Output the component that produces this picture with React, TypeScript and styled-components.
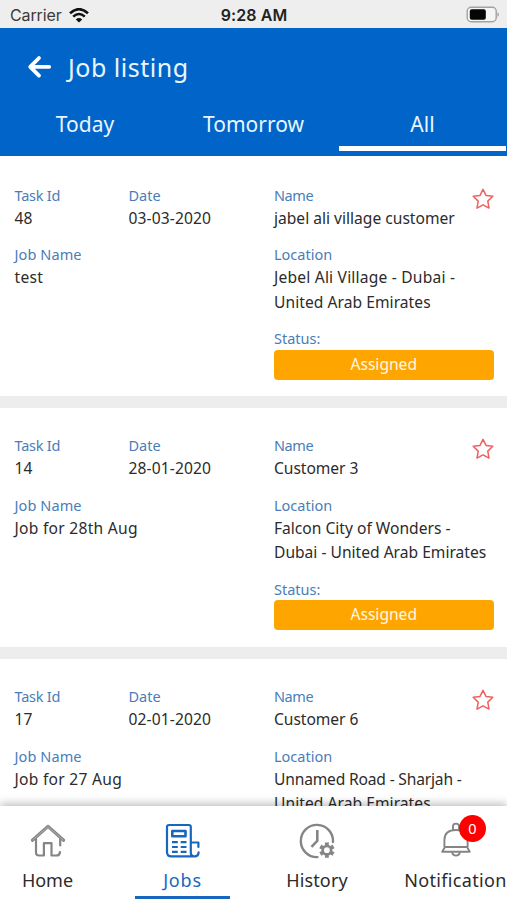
import React from "react";
import styled, { createGlobalStyle } from "styled-components";

const GlobalStyle = createGlobalStyle`
  * { box-sizing: border-box; }
  body { margin: 0; background: #fff; font-family: "Noto Sans", "Open Sans", sans-serif; }
`;

const Screen = styled.div`
  display: flex;
  flex-direction: column;
  width: 507px;
  height: 900px;
  overflow: hidden;
  background: #fff;
`;

const StatusBar = styled.div`
  display: grid;
  grid-template-columns: 1fr auto 1fr;
  align-items: center;
  height: 28px;
  flex: none;
  padding: 2px 8px 0 10px;
  background: #eeeeee;
  color: #3a3a3a;
  font: 400 16px/26px Inter, sans-serif;
`;

const Carrier = styled.div`
  display: flex;
  align-items: center;
  gap: 7px;
  letter-spacing: -0.12px;
`;

const Clock = styled.div`
  color: #222;
  font-weight: 600;
  letter-spacing: 0.1px;
  margin-right: 1px;
`;

const Battery = styled.div`
  justify-self: end;
  display: flex;
  margin-bottom: 2px;
`;

const Header = styled.header`
  flex: none;
  height: 128px;
  background: #0064c8;
  color: #e9f6ff;
`;

const TitleRow = styled.div`
  display: flex;
  align-items: center;
  height: 78px;
  padding-left: 27px;
  gap: 16px;
`;

const Title = styled.h1`
  margin: 0;
  font-size: 25px;
  font-weight: 400;
  line-height: 36px;
  letter-spacing: 0.5px;
`;

const Tabs = styled.div`
  display: grid;
  grid-template-columns: 170px 167px 170px;
`;

const Tab = styled.div<{ $active?: boolean }>`
  height: 44.5px;
  padding-top: 3px;
  margin: ${(p) => (p.$active ? "0 1px 0 2px" : "0")};
  border-bottom: 5.5px solid ${(p) => (p.$active ? "#fff" : "transparent")};
  text-align: center;
  font-size: 21px;
  line-height: 30px;
`;

const List = styled.main`
  flex: 1;
  min-height: 0;
  overflow: hidden;
  padding-top: 1.3px;
`;

const Card = styled.article`
  display: grid;
  grid-template-columns: 114px 145.5px 1fr;
  height: 250.7px;
  padding: 27.5px 13.5px 0 14.5px;
  border-bottom: 12px solid #ededed;
`;

const Column = styled.div`
  display: flex;
  flex-direction: column;
  gap: 14.3px;
`;

const LeftArea = styled.div`
  grid-column: 1 / 3;
  display: grid;
  grid-template-columns: 114px 1fr;
  align-content: start;
  row-gap: 14.3px;
`;

const Field = styled.div<{ $span?: boolean }>`
  grid-column: ${(p) => (p.$span ? "1 / -1" : "auto")};
`;

const Label = styled.div<{ $track?: number }>`
  margin-bottom: 1px;
  color: #4a7db8;
  font-size: 14.5px;
  line-height: 20px;
  letter-spacing: ${(p) => p.$track ?? 0}px;
  white-space: nowrap;
`;

const Value = styled.div<{ $track?: number }>`
  color: #2b2b2b;
  font-size: 15.6px;
  line-height: 24.2px;
  letter-spacing: ${(p) => p.$track ?? 0}px;
  white-space: nowrap;
`;

const NameRow = styled.div`
  display: flex;
  justify-content: space-between;
  align-items: flex-start;
`;

const StarBox = styled.div`
  display: flex;
  padding-top: 3px;
`;

const Badge = styled.div`
  height: 30px;
  margin-top: 1.6px;
  border-radius: 4px;
  background: #ffa500;
  color: #fff8e8;
  text-align: center;
  font-size: 15.6px;
  line-height: 29.4px;
`;

const BottomNav = styled.nav`
  position: relative;
  flex: none;
  display: grid;
  grid-template-columns: 95px 175px 94px 143px;
  height: 94px;
  background: #fff;
  box-shadow: 0 -2px 9px rgba(0, 0, 0, 0.28);
`;

const NavItem = styled.div<{ $active?: boolean; $end?: boolean; $track?: number }>`
  display: flex;
  flex-direction: column;
  align-items: center;
  justify-self: ${(p) => (p.$end ? "end" : "center")};
  width: ${(p) => (p.$end ? 103 : 95)}px;
  padding-top: 16px;
  color: ${(p) => (p.$active ? "#1767bf" : "#2b2b2b")};
  height: 93px;
  border-bottom: 3px solid ${(p) => (p.$active ? "#1767bf" : "transparent")};
  font-size: 18px;
  line-height: 26px;
  letter-spacing: ${(p) => p.$track ?? 0}px;
  white-space: nowrap;
`;

const NavIcon = styled.div`
  position: relative;
  display: flex;
  height: 38px;
  margin-bottom: 7px;
  color: #858585;
`;

const Count = styled.span`
  position: absolute;
  left: 19.5px;
  top: -7px;
  width: 27px;
  height: 27px;
  border-radius: 50%;
  background: #ff0000;
  color: #fff;
  text-align: center;
  font-size: 14.5px;
  line-height: 26px;
  letter-spacing: 0;
`;

const Wifi = () => (
  <svg width="20" height="15" viewBox="0 0 20 15" fill="none" stroke="#111" strokeWidth="2.6">
    <path d="M1 5.2Q10-2.8 19 5.2M4.2 8.6q5.8-5.2 11.6 0" />
    <path d="M10 14.5 6.8 11.4q3.2-2.7 6.4 0Z" fill="#111" stroke="none" />
  </svg>
);

const BatteryIcon = () => (
  <svg width="33" height="17" viewBox="0 0 33 17">
    <rect x="1.2" y="1.2" width="29" height="14.6" rx="4" fill="#f5f5f5" stroke="#a2a2a2" strokeWidth="1.4" />
    <rect x="3.8" y="3.3" width="16" height="10.4" rx="2" fill="#050505" />
    <path d="M31.4 6.3q1.6.7 1.6 2.2t-1.6 2.2Z" fill="#a2a2a2" />
  </svg>
);

const BackArrow = () => (
  <svg width="25" height="24" viewBox="0 0 25 24" fill="none" stroke="#fff" strokeWidth="3.8" strokeLinecap="round" strokeLinejoin="round">
    <path d="M12 3 3.2 11.8l8.8 8.8M4 11.8H22.2" />
  </svg>
);

const Star = () => (
  <svg width="22" height="22" viewBox="0 0 22 22" fill="none" stroke="#f0605f" strokeWidth="1.5" strokeLinejoin="round">
    <path d="m11 1.3 3 6.1 6.8.9-5 4.8 1.2 7L11 16.8 5 20.1l1.2-7-5-4.8 6.8-.9Z" />
  </svg>
);

const HomeIcon = () => (
  <svg width="36" height="38" viewBox="0 0 36 38" fill="none" stroke="currentColor" strokeWidth="2.2" strokeLinecap="round" strokeLinejoin="round">
    <path d="M6 17v13.5q0 3 3 3h4.9V21.2h7.6v12.3h5q3.2 0 3.5-3.4M30.2 23.5V17" />
    <path d="M2.4 18.2 18 4.4l15.6 13.8" strokeWidth="3.2" />
    <path d="M2.8 17.9 18 4.7l15.2 13.2" stroke="#b9b9b9" strokeWidth=".8" />
  </svg>
);

const JobsIcon = () => (
  <svg width="36" height="38" viewBox="0 0 36 38" fill="none" stroke="#1767bf" strokeWidth="2.2" strokeLinejoin="round">
    <path d="M25.8 30.5V5q0-2-2-2H4q-2 0-2 2v25q0 4.4 4.4 4.4h23.2q3.8 0 4-4M25.8 30.5q0 3.9 3.6 3.9M26 20.5h7.4V25" strokeLinecap="round" />
    <rect x="7.3" y="9" width="13.2" height="5.2" strokeWidth="2.6" />
    <path d="M7 20.1h5.8M15.7 20.1h5.8M7 25h5.8M15.7 25h5.8M7 29.9h5.8M15.7 29.9h5.8" />
  </svg>
);

const gearCorners = [
  [-19, 5.6],
  [-15, 7.9],
  [15, 7.9],
  [19, 5.6],
];
const gearPath = Array.from({ length: 6 }, (_, tooth) =>
  gearCorners.map(([offset, radius]) => {
    const angle = ((tooth * 60 + offset) * Math.PI) / 180;
    return `${27.9 + radius * Math.sin(angle)},${28.2 - radius * Math.cos(angle)}`;
  }).join(" "),
).join(" ");

const HistoryIcon = () => (
  <svg width="36" height="38" viewBox="0 0 36 38" fill="none" stroke="currentColor" strokeWidth="2.4">
    <path d="M18.4 35.1A16.1 16.1 0 1 1 34 20" strokeLinecap="round" />
    <path d="M18.3 8v10.8l-5.8 6" strokeWidth="2.6" />
    <polygon points={gearPath} fill="currentColor" stroke="none" />
    <circle cx="27.9" cy="28.2" r="2.9" fill="#fff" stroke="none" />
  </svg>
);

const BellIcon = () => (
  <svg width="32" height="38" viewBox="0 0 32 38" fill="none" stroke="currentColor" strokeWidth="1.9" strokeLinejoin="round">
    <path d="M13 8V4.2q0-2.6 3-2.6t3 2.6V8M4.4 25v-7Q4.4 8 16 8t11.6 10v7" />
    <path d="M5 25h22l2.8 4.8H2.2Z" />
    <path d="M12 30.3q.8 3.3 4 3.3t4-3.3" />
  </svg>
);

type Line = { text: string; track?: number };
type Job = { id: string; date: string; job: Line; name: Line; location: Line[] };

const jobs: Job[] = [
  {
    id: "48",
    date: "03-03-2020",
    job: { text: "test", track: 0.25 },
    name: { text: "jabel ali village customer", track: 0 },
    location: [
      { text: "Jebel Ali Village - Dubai -", track: 0.2 },
      { text: "United Arab Emirates", track: 0.05 },
    ],
  },
  {
    id: "14",
    date: "28-01-2020",
    job: { text: "Job for 28th Aug", track: 0.27 },
    name: { text: "Customer 3", track: -0.05 },
    location: [
      { text: "Falcon City of Wonders -", track: 0 },
      { text: "Dubai - United Arab Emirates", track: 0 },
    ],
  },
  {
    id: "17",
    date: "02-01-2020",
    job: { text: "Job for 27 Aug", track: 0.27 },
    name: { text: "Customer 6", track: -0.05 },
    location: [
      { text: "Unnamed Road - Sharjah -", track: -0.18 },
      { text: "United Arab Emirates", track: 0.05 },
    ],
  },
];

const JobCard = ({ job }: { job: Job }) => (
  <Card>
    <LeftArea>
      <Field>
        <Label $track={-0.25}>Task Id</Label>
        <Value $track={0.2}>{job.id}</Value>
      </Field>
      <Field>
        <Label>Date</Label>
        <Value $track={0.12}>{job.date}</Value>
      </Field>
      <Field $span>
        <Label $track={0.1}>Job Name</Label>
        <Value $track={job.job.track}>{job.job.text}</Value>
      </Field>
    </LeftArea>
    <Column>
      <NameRow>
        <Field>
          <Label $track={-0.4}>Name</Label>
          <Value $track={job.name.track}>{job.name.text}</Value>
        </Field>
        <StarBox>
          <Star />
        </StarBox>
      </NameRow>
      <Field>
        <Label>Location</Label>
        {job.location.map((line) => (
          <Value key={line.text} $track={line.track}>
            {line.text}
          </Value>
        ))}
      </Field>
      <Field>
        <Label>Status:</Label>
        <Badge>Assigned</Badge>
      </Field>
    </Column>
  </Card>
);

export default function App() {
  return (
    <Screen>
      <GlobalStyle />
      <StatusBar>
        <Carrier>
          Carrier <Wifi />
        </Carrier>
        <Clock>9:28 AM</Clock>
        <Battery>
          <BatteryIcon />
        </Battery>
      </StatusBar>
      <Header>
        <TitleRow>
          <BackArrow />
          <Title>Job listing</Title>
        </TitleRow>
        <Tabs>
          <Tab>Today</Tab>
          <Tab>Tomorrow</Tab>
          <Tab $active>All</Tab>
        </Tabs>
      </Header>
      <List>
        {jobs.map((job) => (
          <JobCard key={job.id} job={job} />
        ))}
      </List>
      <BottomNav>
        <NavItem>
          <NavIcon>
            <HomeIcon />
          </NavIcon>
          Home
        </NavItem>
        <NavItem $active $track={0.8}>
          <NavIcon>
            <JobsIcon />
          </NavIcon>
          Jobs
        </NavItem>
        <NavItem $track={0.15}>
          <NavIcon>
            <HistoryIcon />
          </NavIcon>
          History
        </NavItem>
        <NavItem $end $track={0.35}>
          <NavIcon>
            <BellIcon />
            <Count>0</Count>
          </NavIcon>
          Notification
        </NavItem>
      </BottomNav>
    </Screen>
  );
}
